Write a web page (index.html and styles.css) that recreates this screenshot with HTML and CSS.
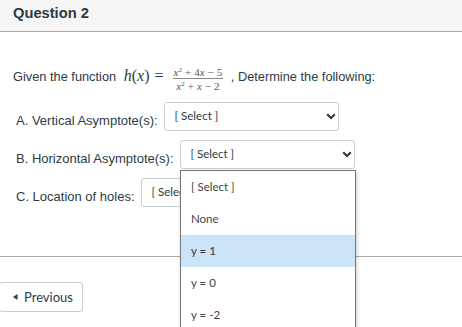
FILE: index.html
```html
<!DOCTYPE html>
<html lang="en">
<head>
    <meta charset="UTF-8">
    <meta name="viewport" content="width=device-width, initial-scale=1.0">
    <title>Question 2</title>
    <link rel="stylesheet" href="styles.css">
</head>
<body>
    <div class="question">
        <div class="question-header">Question 2</div>
        <div class="question-body">
            <p class="prompt">Given the function <span class="math"><i>h</i>(<i>x</i>)<span class="eq">=</span><span class="frac"><span class="num"><i>x</i><sup>2</sup><span class="op">+</span>4<i>x</i><span class="op">−</span>5</span><span class="den"><i>x</i><sup>2</sup><span class="op">+</span><i>x</i><span class="op">−</span>2</span></span></span> , Determine the following:</p>

            <div class="answer-row">
                <span class="answer-label">A. Vertical Asymptote(s):</span>
                <span class="select-box">
                    <span>[ Select ]</span>
                    <svg class="chevron" width="10" height="7" viewBox="0 0 10 7"><polyline points="1.2,1.2 5,5 8.8,1.2" fill="none" stroke="#2d3b45" stroke-width="2.2"/></svg>
                </span>
            </div>
            <div class="answer-row">
                <span class="answer-label">B. Horizontal Asymptote(s):</span>
                <span class="select-box">
                    <span>[ Select ]</span>
                    <svg class="chevron" width="10" height="7" viewBox="0 0 10 7"><polyline points="1.2,1.2 5,5 8.8,1.2" fill="none" stroke="#2d3b45" stroke-width="2.2"/></svg>
                </span>
            </div>
            <div class="answer-row">
                <span class="answer-label">C. Location of holes:</span>
                <span class="select-box">
                    <span>[ Select ]</span>
                    <svg class="chevron" width="10" height="7" viewBox="0 0 10 7"><polyline points="1.2,1.2 5,5 8.8,1.2" fill="none" stroke="#2d3b45" stroke-width="2.2"/></svg>
                </span>
            </div>
        </div>
    </div>

    <div class="nav-bar">
        <button class="nav-btn">
            <svg class="prev-icon" width="5" height="6" viewBox="0 0 5 6"><polygon points="4.5,0 0,3 4.5,6" fill="#2d3b45"/></svg>
            Previous
        </button>
    </div>

    <!-- open list of the B select -->
    <ul class="select-menu">
        <li>[ Select ]</li>
        <li>None</li>
        <li class="active">y = 1</li>
        <li>y = 0</li>
        <li>y = -2</li>
    </ul>
</body>
</html>
```

FILE: styles.css
```css
body {
    margin: 0;
    font-family: "Liberation Sans", Arial, sans-serif;
    color: #2d3b45;
    background: #fff;
    height: 327px;
    overflow: hidden;
    position: relative;
}

.question-header {
    height: 27px;
    padding: 4px 0 0 13px;
    background: #f5f5f5;
    border-bottom: 1px solid #a9a9a9;
    font-size: 14.7px;
    font-weight: bold;
    line-height: 18px;
}

.question-body {
    padding: 0 0 0 13px;
}

.prompt {
    margin: 34px 0 0;
    height: 20px;
    font-size: 12.8px;
    line-height: 20px;
}

.math {
    font-family: "Liberation Serif", "Times New Roman", serif;
    font-size: 16px;
    margin-left: 4px;
}

.math i {
    font-style: italic;
}

.eq {
    margin: 0 6px 0 5px;
}

.frac {
    display: inline-flex;
    flex-direction: column;
    align-items: center;
    vertical-align: 5px;
    font-size: 11px;
    line-height: 10px;
    color: #555;
    margin: 0 4px 0 3px;
}

.frac .num {
    padding: 0 1px 1px;
    border-bottom: 1px solid #888;
}

.frac .den {
    padding-top: 2px;
}

.frac .op {
    margin: 0 3px;
}

.frac sup {
    font-size: 7px;
    vertical-align: 4px;
    line-height: 0;
}

.answer-row {
    display: flex;
    align-items: center;
    margin: 0 0 9px 3px;
}

.answer-row:first-of-type {
    margin-top: 16px;
}

.answer-label {
    font-size: 13px;
    padding-top: 7px;
    margin-right: 6px;
}

.select-box {
    box-sizing: border-box;
    width: 175px;
    height: 29px;
    display: flex;
    align-items: center;
    justify-content: space-between;
    padding: 0 2px 0 10px;
    border: 1px solid #c7cdd1;
    border-radius: 3px;
    font-family: Lato, sans-serif;
    font-size: 11.5px;
    color: #2d3b45;
}

.select-box span {
    margin-top: -3px;
}

.nav-bar {
    margin-top: 49px;
    border-top: 1px solid #a9a9a9;
    padding-top: 25px;
}

.nav-btn {
    height: 30px;
    width: 84px;
    margin-left: -1px;
    padding: 0 0 0 13px;
    display: flex;
    align-items: center;
    gap: 6px;
    background: #fff;
    border: 1px solid #c7cdd1;
    border-radius: 3px;
    font-family: Lato, sans-serif;
    font-size: 13px;
    color: #2d3b45;
}

.select-menu {
    position: absolute;
    left: 180px;
    top: 170px;
    width: 174px;
    margin: 0;
    padding: 0;
    list-style: none;
    background: #fff;
    border: 1px solid #767676;
    box-shadow: 1px 2px 4px rgba(0, 0, 0, 0.2);
    font-family: Lato, sans-serif;
    font-size: 11.5px;
    color: #444;
}

.select-menu li {
    height: 32px;
    line-height: 32px;
    padding-left: 10px;
}

.select-menu li.active {
    background: #cce4f7;
    color: #2d3b45;
}
```
